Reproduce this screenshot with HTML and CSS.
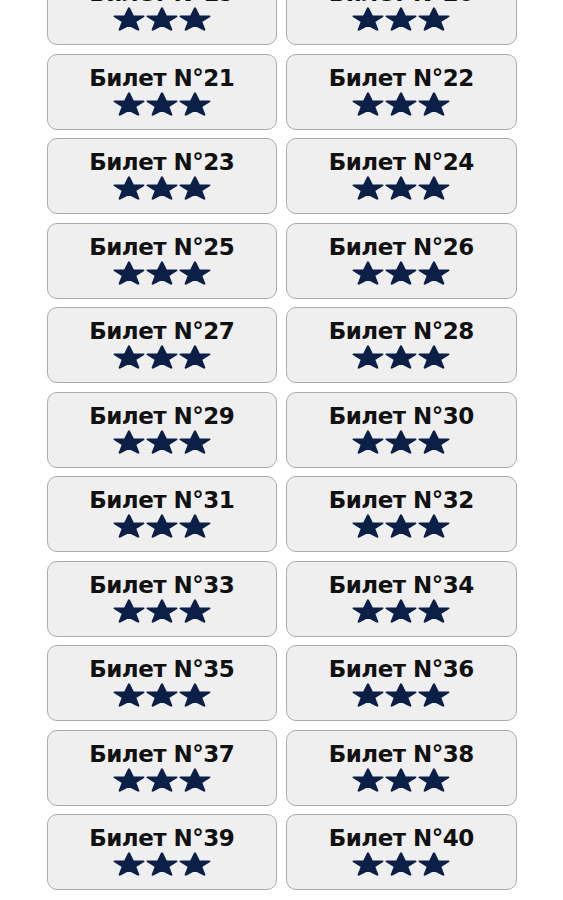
FILE: index.html
```html
<html lang="ru"><head>
<meta charset="UTF-8">
<meta name="viewport" content="width=device-width, initial-scale=1.0">
<title>Билеты</title>
<link rel="stylesheet" href="styles.css">
</head>
<body>
<svg width="0" height="0" class="defs">
<symbol id="star" viewBox="0 0 100 96" preserveAspectRatio="none">
<path d="M50 5 L62 36 L95 37 L69 58 L79 91 L50 72 L21 91 L31 58 L5 37 L38 36 Z"/>
</symbol>
</svg>

<div class="tickets" id="tickets"></div>

<script>
// 19..40, first row is cut off by the top of the window
const list = document.querySelector("#tickets");
for (let n = 19; n <= 40; n++) {
    const a = document.createElement("a");
    a.className = "ticket";
    a.innerHTML = '<span class="name">Билет N°' + n + '</span>' +
        '<span class="stars">' +
        '<svg><use href="#star"/></svg>'.repeat(3) +
        '</span>';
    list.appendChild(a);
}
</script>
</body></html>
```
FILE: styles.css
```css
body {
    margin: 0;
    background: #fff;
    font-family: "DejaVu Sans", sans-serif;
}

.defs {
    position: absolute;
}

.tickets {
    width: 470px;
    margin: -31px auto 0 auto;
    display: grid;
    grid-template-columns: 1fr 1fr;
    column-gap: 9px;
    row-gap: 8.5px;
}

.ticket {
    display: flex;
    flex-direction: column;
    align-items: center;
    height: 76px;
    box-sizing: border-box;
    padding-top: 11px;
    background: #efefef;
    border: 1.5px solid #ababab;
    border-radius: 10px;
    color: #111;
    text-decoration: none;
}

.ticket .name {
    font-weight: bold;
    font-size: 23px;
    line-height: 25px;
    letter-spacing: -0.5px;
}

.ticket .stars {
    display: flex;
    gap: 1px;
    margin-top: 1px;
}

.ticket .stars svg {
    width: 32px;
    height: 24px;
    fill: #0b1f47;
    stroke: #0b1f47;
    stroke-width: 7;
    stroke-linejoin: round;
}
```
